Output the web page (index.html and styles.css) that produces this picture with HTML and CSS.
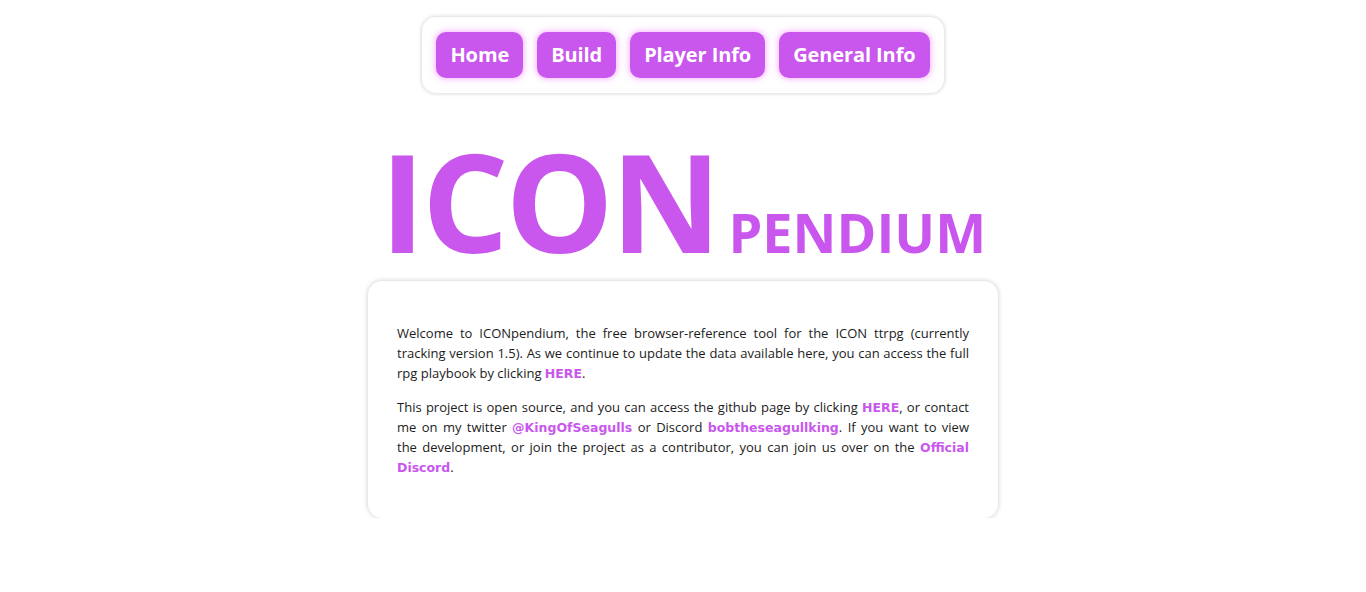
FILE: index.html
```html
<!DOCTYPE html>
<html>
<head>
<meta charset="utf-8">
<link rel="stylesheet" href="styles.css">
</head>
<body>
<div class="page">
  <nav class="nav">
    <a class="btn" href="#">Home</a>
    <a class="btn" href="#">Build</a>
    <a class="btn" href="#">Player Info</a>
    <a class="btn" href="#">General Info</a>
  </nav>
  <h1 class="title"><span class="big">ICON</span><span class="small">PENDIUM</span></h1>
  <section class="card">
    <p>Welcome to ICONpendium, the free browser-reference tool for the ICON ttrpg (currently tracking version 1.5). As we continue to update the data available here, you can access the full rpg playbook by clicking <a class="link" href="#">HERE</a>.</p>
    <p>This project is open source, and you can access the github page by clicking <a class="link" href="#">HERE</a>, or contact me on my twitter <a class="link" href="#">@KingOfSeagulls</a> or Discord <a class="link" href="#">bobtheseagullking</a>. If you want to view the&nbsp;development, or join the project as a contributor, you can join us over on the <a class="link" href="#">Official Discord</a>.</p>
  </section>
</div>
</body>
</html>
```
FILE: styles.css
```css
html, body {
  margin: 0;
  padding: 0;
  background: #ffffff;
}
body {
  font-family: "Open Sans", "Noto Sans", sans-serif;
}
.page {
  display: flex;
  flex-direction: column;
  align-items: center;
  padding-top: 17px;
}
.nav {
  display: flex;
  gap: 14px;
  padding: 15px 14px;
  background: #fff;
  border-radius: 14px;
  box-shadow: 0 0 4px rgba(0,0,0,0.22);
}
.btn {
  display: block;
  height: 46px;
  line-height: 46px;
  padding: 0 14px;
  background: #c957ed;
  color: #fff;
  text-decoration: none;
  font-family: "Open Sans", sans-serif;
  font-weight: 700;
  font-size: 20px;
  letter-spacing: -0.1px;
  border-radius: 10px;
  box-shadow: 0 0 6px 1px rgba(240,120,255,0.55);
}
.title {
  margin: 40px 0 0 0;
  display: flex;
  align-items: baseline;
  color: #c957ed;
  font-family: "Open Sans", sans-serif;
  font-weight: 700;
  line-height: 1;
}
.big {
  font-size: 136px;
  letter-spacing: -3px;
}
.small {
  font-size: 54px;
  margin-left: 10px;
}
.card {
  width: 572px;
  margin-top: 12px;
  padding: 42px 29px 41px;
  background: #fff;
  border-radius: 14px;
  box-shadow: 0 0 5px rgba(0,0,0,0.22);
}
.card p {
  margin: 0 0 14px 0;
  font-size: 13px;
  line-height: 20px;
  color: #1c1c1c;
  text-align: justify;
}
.card p:last-child {
  margin-bottom: 0;
}
.link {
  color: #c957ed;
  font-family: "DejaVu Sans", sans-serif;
  font-weight: 700;
  font-size: 12.5px;
  line-height: 1;
  text-decoration: none;
}
```
